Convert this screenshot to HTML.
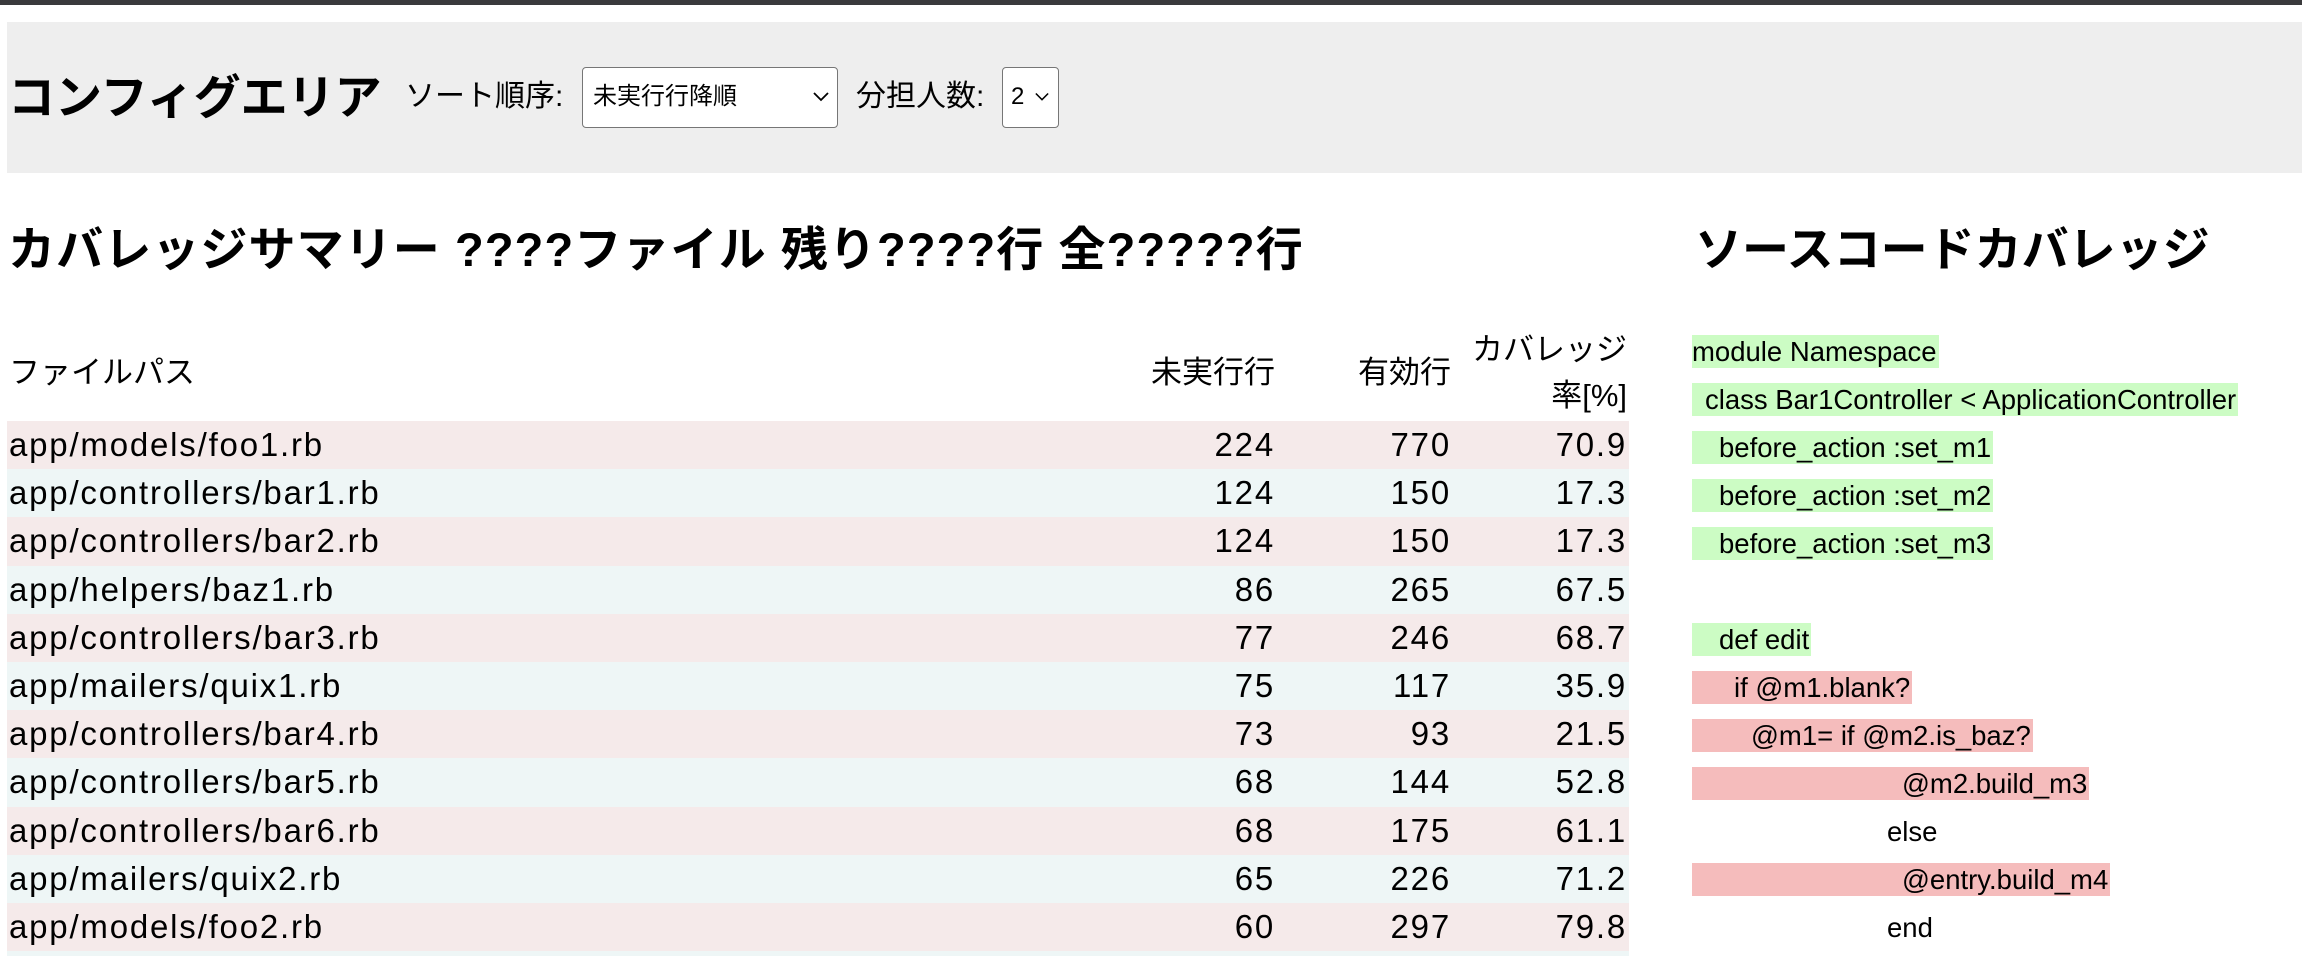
<!DOCTYPE html>
<html><head><meta charset="utf-8"><style>
*{margin:0;padding:0;box-sizing:border-box}
html,body{width:2302px;height:956px;overflow:hidden}
body{background:#fff;font-family:"Liberation Sans","Noto Sans CJK JP",sans-serif;font-size:23.5px;color:#000}
#w{position:relative;width:2302px;height:956px;overflow:hidden}
.top{position:absolute;left:0;top:0;width:2302px;height:5px;background:#3a3a3c}
.cfg{position:absolute;left:7px;top:22px;width:2295px;height:151px;background:#eeeeee}
.h{position:absolute;font-weight:bold;font-size:47px;line-height:56px;white-space:nowrap}
.lbl{position:absolute;white-space:nowrap;font-size:30px;line-height:34px}
.sel{position:absolute;background:#fff;border:1.5px solid #767676;border-radius:4px;font-size:24px;line-height:58px;padding-left:10px}
.sel svg{position:absolute;top:24px}
table{position:absolute;left:7px;top:325px;width:1622px;border-collapse:collapse;font-size:33px;letter-spacing:1.8px}
td,th{font-weight:normal;height:48.2px;padding:0 2px;white-space:nowrap;line-height:38px}
th{text-align:left;letter-spacing:0;font-size:31px}
td.n,th.n{text-align:right}
tr.p{background:#f5eaea}
tr.b{background:#eef6f6}
.code{position:absolute;left:1692px;top:335px;font-size:27.5px}
.code div{height:48px}
.code span{display:inline-block;height:33px;line-height:33px;white-space:pre;padding-right:2px}
.g{background:#ccfcc4}.r{background:#f5bcbc}
</style></head><body><div id="w">
<div class="top"></div>
<div class="cfg"></div>
<div class="h" style="left:8px;top:70px">コンフィグエリア</div>
<div class="lbl" style="left:405px;top:80px">ソート順序:</div>
<div class="sel" style="left:582px;top:67px;width:256px;height:61px">未実行行降順<svg style="left:230px" width="16" height="10" viewBox="0 0 16 10"><path d="M1 1 L8 8 L15 1" fill="none" stroke="#000" stroke-width="1.8"/></svg></div>
<div class="lbl" style="left:856px;top:80px">分担人数:</div>
<div class="sel" style="left:1002px;top:67px;width:57px;height:61px;padding-left:8px">2<svg style="left:32px" width="14" height="10" viewBox="0 0 16 10"><path d="M1 1 L8 8 L15 1" fill="none" stroke="#000" stroke-width="1.8"/></svg></div>
<div class="h" style="left:8px;top:222px;letter-spacing:1.1px">カバレッジサマリー ????ファイル 残り????行 全?????行</div>
<div class="h" style="left:1695px;top:222px">ソースコードカバレッジ</div>
<table>
<tr style="height:96px"><th style="vertical-align:middle">ファイルパス</th><th class="n" style="width:200px">未実行行</th><th class="n" style="width:176px">有効行</th><th class="n" style="width:176px;white-space:normal;line-height:46px">カバレッジ<br>率[%]</th></tr>
<tr class="p"><td>app/models/foo1.rb</td><td class="n">224</td><td class="n">770</td><td class="n">70.9</td></tr>
<tr class="b"><td>app/controllers/bar1.rb</td><td class="n">124</td><td class="n">150</td><td class="n">17.3</td></tr>
<tr class="p"><td>app/controllers/bar2.rb</td><td class="n">124</td><td class="n">150</td><td class="n">17.3</td></tr>
<tr class="b"><td>app/helpers/baz1.rb</td><td class="n">86</td><td class="n">265</td><td class="n">67.5</td></tr>
<tr class="p"><td>app/controllers/bar3.rb</td><td class="n">77</td><td class="n">246</td><td class="n">68.7</td></tr>
<tr class="b"><td>app/mailers/quix1.rb</td><td class="n">75</td><td class="n">117</td><td class="n">35.9</td></tr>
<tr class="p"><td>app/controllers/bar4.rb</td><td class="n">73</td><td class="n">93</td><td class="n">21.5</td></tr>
<tr class="b"><td>app/controllers/bar5.rb</td><td class="n">68</td><td class="n">144</td><td class="n">52.8</td></tr>
<tr class="p"><td>app/controllers/bar6.rb</td><td class="n">68</td><td class="n">175</td><td class="n">61.1</td></tr>
<tr class="b"><td>app/mailers/quix2.rb</td><td class="n">65</td><td class="n">226</td><td class="n">71.2</td></tr>
<tr class="p"><td>app/models/foo2.rb</td><td class="n">60</td><td class="n">297</td><td class="n">79.8</td></tr>
<tr class="b"><td>&nbsp;</td><td></td><td></td><td></td></tr>
</table>
<div class="code">
<div><span class="g">module Namespace</span></div>
<div><span class="g" style="padding-left:13px">class Bar1Controller &lt; ApplicationController</span></div>
<div><span class="g" style="padding-left:27px">before_action :set_m1</span></div>
<div><span class="g" style="padding-left:27px">before_action :set_m2</span></div>
<div><span class="g" style="padding-left:27px">before_action :set_m3</span></div>
<div><span> </span></div>
<div><span class="g" style="padding-left:27px">def edit</span></div>
<div><span class="r" style="padding-left:42px">if @m1.blank?</span></div>
<div><span class="r" style="padding-left:59px">@m1= if @m2.is_baz?</span></div>
<div><span class="r" style="padding-left:210px">@m2.build_m3</span></div>
<div><span style="padding-left:195px">else</span></div>
<div><span class="r" style="padding-left:210px">@entry.build_m4</span></div>
<div><span style="padding-left:195px">end</span></div>
</div>
</div></body></html>
